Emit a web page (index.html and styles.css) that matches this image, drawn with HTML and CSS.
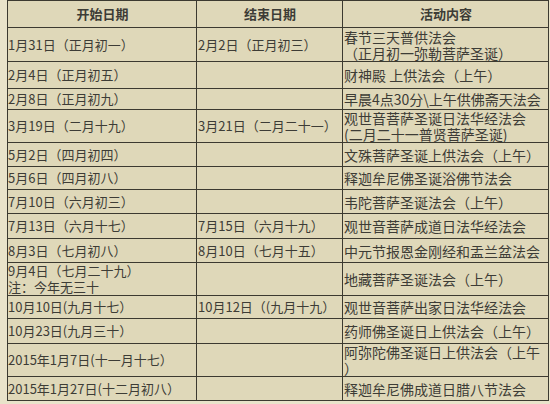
FILE: index.html
```html
<!DOCTYPE html>
<html lang="zh">
<head>
<meta charset="utf-8">
<link rel="stylesheet" href="styles.css">
</head>
<body>
<table class="cal">
  <colgroup>
    <col class="c1"><col class="c2"><col class="c3">
  </colgroup>
  <tr class="h27 head"><th>开始日期</th><th>结束日期</th><th>活动内容</th></tr>
  <tr class="h34"><td>1月31日（正月初一）</td><td>2月2日（正月初三）</td><td>春节三天普供法会<br>（正月初一弥勒菩萨圣诞）</td></tr>
  <tr class="h27"><td>2月4日（正月初五）</td><td></td><td>财神殿 上供法会（上午）</td></tr>
  <tr class="h21"><td>2月8日（正月初九）</td><td></td><td>早晨4点30分\上午供佛斋天法会</td></tr>
  <tr class="h33"><td>3月19日（二月十九）</td><td>3月21日（二月二十一）</td><td>观世音菩萨圣诞日法华经法会<br>(二月二十一普贤菩萨圣诞)</td></tr>
  <tr class="h24"><td>5月2日（四月初四）</td><td></td><td>文殊菩萨圣诞上供法会（上午）</td></tr>
  <tr class="h23"><td>5月6日（四月初八）</td><td></td><td>释迦牟尼佛圣诞浴佛节法会</td></tr>
  <tr class="h24"><td>7月10日（六月初三）</td><td></td><td>韦陀菩萨圣诞法会（上午）</td></tr>
  <tr class="h25"><td>7月13日（六月十七）</td><td>7月15日（六月十九）</td><td>观世音菩萨成道日法华经法会</td></tr>
  <tr class="h24"><td>8月3日（七月初八）</td><td>8月10日（七月十五）</td><td>中元节报恩金刚经和盂兰盆法会</td></tr>
  <tr class="h33"><td>9月4日（七月二十九）<br>注：今年无三十</td><td></td><td>地藏菩萨圣诞法会（上午）</td></tr>
  <tr class="h23"><td>10月10日(九月十七）</td><td>10月12日（(九月十九）</td><td>观世音菩萨出家日法华经法会</td></tr>
  <tr class="h25"><td>10月23日(九月三十）</td><td></td><td>药师佛圣诞日上供法会（上午）</td></tr>
  <tr class="h33"><td>2015年1月7日(十一月十七）</td><td></td><td>阿弥陀佛圣诞日上供法会（上午<br>）</td></tr>
  <tr class="h24"><td>2015年1月27日(十二月初八）</td><td></td><td>释迦牟尼佛成道日腊八节法会</td></tr>
</table>
</body>
</html>
```

FILE: styles.css
```css
html, body {
  margin: 0;
  padding: 0;
  background: #e9e3ca;
}
body {
  padding-left: 7px;
  font-family: "Noto Sans CJK SC", "DejaVu Sans", sans-serif;
  font-size: 14px;
  color: #3d3c36;
}
.cal {
  border-collapse: collapse;
  table-layout: fixed;
  width: 541px;
  background: #dfd8b9;
}
.c1 { width: 189px; }
.c2 { width: 146px; }
.c3 { width: 206px; }
.cal th, .cal td {
  border: 1px solid #3c3a30;
  padding: 0 0 0 1px;
  line-height: 16px;
  vertical-align: middle;
  text-align: left;
}
.cal td:first-child,
.cal td:nth-child(2) {
  font-size: 13px;
}
.cal td:first-child { padding-left: 0; }
.cal th {
  text-align: center;
  font-weight: bold;
  font-size: 13px;
}
.h21 { height: 21px; }
.h23 { height: 23px; }
.h24 { height: 24px; }
.h25 { height: 25px; }
.h27 { height: 27px; }
.h33 { height: 33px; }
.h34 { height: 34px; }
```
